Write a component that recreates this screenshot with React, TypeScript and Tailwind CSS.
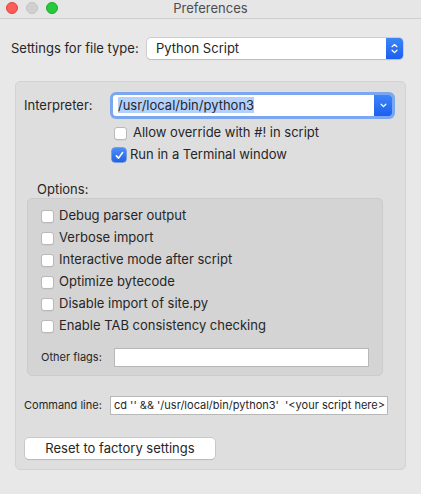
import React from 'react';

const font = { fontFamily: 'Inter, "Liberation Sans", sans-serif' };

function Box({ checked = false }: { checked?: boolean }) {
  if (checked) {
    return (
      <span className="flex h-[14px] w-[14px] shrink-0 items-center justify-center rounded-[3px] bg-gradient-to-b from-[#4d8cf6] to-[#1f63e6] shadow-[0_0_0_0.5px_#1a5ad6]">
        <svg viewBox="0 0 12 12" className="h-[11px] w-[11px]">
          <path d="M2.6 6.4 L5 8.9 L9.4 2.8" fill="none" stroke="white" strokeWidth="1.7" strokeLinecap="round" strokeLinejoin="round" />
        </svg>
      </span>
    );
  }
  return (
    <span className="h-[13px] w-[13px] shrink-0 rounded-[3px] border border-[#b9b9b9] bg-white shadow-[0_0.5px_0.5px_rgba(0,0,0,0.08)]" />
  );
}

function Check({ label, checked }: { label: string; checked?: boolean }) {
  return (
    <div className="flex h-[22px] items-center gap-[5px]">
      <Box checked={checked} />
      <span>{label}</span>
    </div>
  );
}

export default function App() {
  const options = [
    'Debug parser output',
    'Verbose import',
    'Interactive mode after script',
    'Optimize bytecode',
    'Disable import of site.py',
    'Enable TAB consistency checking',
  ];

  return (
    <div className="flex h-[494px] w-[421px] flex-col bg-[#e8e8e8] text-[13px] text-[#262626]" style={font}>
      <div className="relative flex h-[19px] shrink-0 items-center justify-center border-b border-[#cfcfcf] bg-[#e6e6e6]">
        <div className="absolute left-[6px] top-[2px] flex gap-[8px]">
          <span className="h-[12px] w-[12px] rounded-full border border-[#e0443e] bg-[#fd5e57]" />
          <span className="h-[12px] w-[12px] rounded-full border border-[#c2c2c2] bg-[#d0d0d0]" />
          <span className="h-[12px] w-[12px] rounded-full border border-[#1aab29] bg-[#27c93f]" />
        </div>
        <span className="text-[13px] text-[#4d4d4d]">Preferences</span>
      </div>

      <div className="mt-[19px] flex h-[21px] items-center pl-[11px]">
        <span className="w-[136px]">Settings for file type:</span>
        <div className="flex h-[21px] w-[256px] items-center rounded-[4px] bg-white shadow-[0_0_0_0.5px_#b5b5b5,0_0.5px_1px_rgba(0,0,0,0.15)]">
          <span className="flex-1 pl-[9px]">Python Script</span>
          <span className="flex h-[21px] w-[17px] items-center justify-center rounded-r-[4px] bg-gradient-to-b from-[#3d85f7] to-[#1b5ff0]">
            <svg viewBox="0 0 10 14" className="h-[13px] w-[9px]">
              <path d="M2.3 5 L5 2.4 L7.7 5 M2.3 9 L5 11.6 L7.7 9" fill="none" stroke="white" strokeWidth="1.4" strokeLinecap="round" strokeLinejoin="round" />
            </svg>
          </span>
        </div>
      </div>

      <div className="mx-[15px] mt-[22px] flex h-[389px] flex-col rounded-[5px] border border-[#d3d3d3] bg-[#dedede] px-[8px]">
        <div className="mt-[13px] flex items-center">
          <span className="w-[89px]">Interpreter:</span>
          <div className="flex h-[21px] w-[279px] items-center rounded-[3px] bg-white shadow-[0_0_0_3px_#7ba7f0]">
            <span className="ml-[5px] flex-1">
              <span className="bg-[#b3d1fd]">/usr/local/bin/python3</span>
            </span>
            <span className="flex h-[21px] w-[18px] items-center justify-center rounded-r-[3px] bg-gradient-to-b from-[#3d85f7] to-[#1b5ff0]">
              <svg viewBox="0 0 10 10" className="h-[9px] w-[9px]">
                <path d="M2.4 3.6 L5 6.2 L7.6 3.6" fill="none" stroke="white" strokeWidth="1.4" strokeLinecap="round" strokeLinejoin="round" />
              </svg>
            </span>
          </div>
        </div>

        <div className="ml-[89px] mt-[6px] flex flex-col">
          <div className="flex h-[22px] items-center gap-[6px] pl-[1px]">
            <Box />
            <span>Allow override with #! in script</span>
          </div>
          <div className="-ml-[1px] flex h-[22px] items-center gap-[4px]">
            <Box checked />
            <span>Run in a Terminal window</span>
          </div>
        </div>

        <span className="ml-[13px] mt-[16px] leading-[15px]">Options:</span>

        <div className="ml-[3px] mt-[1px] flex h-[178px] w-[356px] flex-col rounded-[5px] border border-[#cbcbcb] bg-[#d4d4d4] px-[13px] pt-[6px]">
          {options.map((o) => (
            <Check key={o} label={o} />
          ))}
          <div className="mt-[11px] flex items-center">
            <span className="w-[73px] text-[11px]">Other flags:</span>
            <span className="h-[19px] w-[256px] border border-[#b8b8b8] bg-white" />
          </div>
        </div>

        <div className="mt-[20px] flex items-center">
          <span className="w-[86px] text-[11px]">Command line:</span>
          <div className="flex h-[19px] w-[278px] items-center overflow-hidden whitespace-pre border border-[#b8b8b8] bg-white pl-[3px] text-[11px]">
            {"cd '' && '/usr/local/bin/python3'  '<your script here>"}
          </div>
        </div>

        <button className="ml-[1px] mt-[23px] h-[21px] w-[190px] rounded-[4px] bg-white text-[13px] shadow-[0_0_0_0.5px_#b5b5b5,0_0.5px_1px_rgba(0,0,0,0.15)]">
          Reset to factory settings
        </button>
      </div>
    </div>
  );
}
